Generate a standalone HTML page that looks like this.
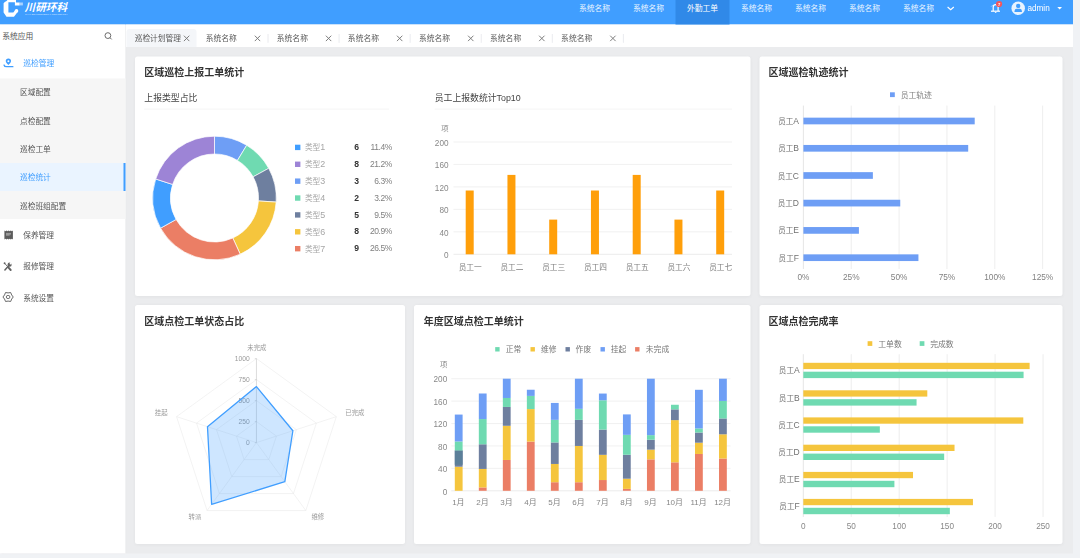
<!DOCTYPE html>
<html lang="zh-CN">
<head>
<meta charset="utf-8">
<title>巡检统计</title>
<style>
html,body{margin:0;padding:0;width:1080px;height:558px;overflow:hidden;background:#f0f2f5}
#root{position:absolute;left:0;top:0;width:2160px;height:1116px;transform:scale(0.5);transform-origin:0 0;overflow:hidden;
font-family:"Liberation Sans","Noto Sans CJK SC",sans-serif}
#root div,#root svg{position:absolute}
.s{left:0;top:0;pointer-events:none}
.t{white-space:nowrap;margin:0}
</style>
</head>
<body>
<div id="root">
<div style="left:0px;top:0px;width:2146.2px;height:1107px;background:#ebecee;"></div>
<div style="left:0px;top:0px;width:2146.2px;height:49.2px;background:#409eff;"></div>
<div style="left:0px;top:49.2px;width:251.2px;height:1057.8px;background:#fff;box-shadow:1px 0 3px rgba(0,21,41,.10);"></div>
<div style="left:252px;top:49.2px;width:1894.2px;height:44.8px;background:#fff;"></div>
<div style="left:253px;top:58.4px;width:140.4px;height:35.8px;background:#f4f6f9;border-radius:6px 6px 0 0;"></div>
<svg class="s" width="2160" height="1116" viewBox="0 0 2160 1116"><polygon points="16.8,-2 32,-2 32,5 39.2,5 39.2,10.8 29.8,10.8 29.8,4.4 16.8,4.4 16.8,25 26.6,25 30.6,20 35.2,24 28,33.6 13,33.6 7.2,25.2 7.2,6.6 9.6,4.2 13.2,1.8" fill="#fff"/><rect x="39.2" y="5" width="6.6" height="5.8" fill="#fff" opacity=".55"/><circle cx="33" cy="21.8" r="3.6" fill="#fff"/></svg>
<div class="t" style="top:-2.5px;height:31.8px;line-height:31.8px;font-size:21.2px;color:#fff;font-weight:700;left:49.2px;font-style:italic;letter-spacing:0px;">川研环科</div>
<div class="t" style="top:24.93px;height:6.54px;line-height:6.54px;font-size:4.36px;color:rgba(255,255,255,.8);left:49.8px;letter-spacing:0.12px;">CYHK ENVIRONMENTAL TECHNOLOGY</div>
<div style="left:1351px;top:0px;width:108px;height:49.2px;background:#3089e8;"></div>
<div class="t" style="top:3.7px;height:23.4px;line-height:23.4px;font-size:15.6px;color:rgba(255,255,255,.92);left:1039px;width:300px;text-align:center;">系统名称</div>
<div class="t" style="top:3.7px;height:23.4px;line-height:23.4px;font-size:15.6px;color:rgba(255,255,255,.92);left:1147px;width:300px;text-align:center;">系统名称</div>
<div class="t" style="top:3.7px;height:23.4px;line-height:23.4px;font-size:15.6px;color:#fff;left:1255px;width:300px;text-align:center;">外勤工单</div>
<div class="t" style="top:3.7px;height:23.4px;line-height:23.4px;font-size:15.6px;color:rgba(255,255,255,.92);left:1363px;width:300px;text-align:center;">系统名称</div>
<div class="t" style="top:3.7px;height:23.4px;line-height:23.4px;font-size:15.6px;color:rgba(255,255,255,.92);left:1471px;width:300px;text-align:center;">系统名称</div>
<div class="t" style="top:3.7px;height:23.4px;line-height:23.4px;font-size:15.6px;color:rgba(255,255,255,.92);left:1579px;width:300px;text-align:center;">系统名称</div>
<div class="t" style="top:3.7px;height:23.4px;line-height:23.4px;font-size:15.6px;color:rgba(255,255,255,.92);left:1687px;width:300px;text-align:center;">系统名称</div>
<svg class="s" width="2160" height="1116" viewBox="0 0 2160 1116"><polyline points="1895.2,14 1901.4,19.4 1907.6,14" fill="none" stroke="#fff" stroke-width="2.3"/><path d="M1986.4 21.8 L1986.4 14.4 A4.9 5 0 0 1 1996.2 14.4 L1996.2 21.8" fill="none" stroke="#fff" stroke-width="2.4"/><line x1="1982" y1="22.4" x2="2000" y2="22.4" stroke="#fff" stroke-width="2.4"/><line x1="1982.8" y1="12.8" x2="1984.8" y2="10.8" stroke="#fff" stroke-width="1.6"/><line x1="1989.8" y1="24.8" x2="1992.8" y2="24.8" stroke="#fff" stroke-width="1.8"/><circle cx="1998.2" cy="8" r="6.2" fill="#f4565c"/><circle cx="2036.4" cy="16.6" r="13.5" fill="#e8f3ff"/><circle cx="2036.4" cy="11.8" r="4.4" fill="#409eff"/><path d="M2029 23.8 L2029 22 Q2029.4 17.4 2033.2 17.4 L2039.6 17.4 Q2043.4 17.4 2043.8 22 L2043.8 23.8 Z" fill="#409eff"/><polygon points="2114.6,14 2124,14 2119.3,19.2" fill="#fff"/></svg>
<div class="t" style="top:1.7px;height:12.6px;line-height:12.6px;font-size:8.4px;color:#fff;font-weight:700;left:1848.2px;width:300px;text-align:center;">7</div>
<div class="t" style="top:3.5px;height:24.6px;line-height:24.6px;font-size:16.4px;color:#fff;left:2054.8px;">admin</div>
<div class="t" style="top:60.1px;height:23.4px;line-height:23.4px;font-size:15.6px;color:#555;left:4.4px;">系统应用</div>
<svg class="s" width="2160" height="1116" viewBox="0 0 2160 1116"><circle cx="215.8" cy="71.2" r="5.8" fill="none" stroke="#6a6a6a" stroke-width="2"/><line x1="220" y1="75.4" x2="223.4" y2="78.8" stroke="#6a6a6a" stroke-width="2"/><path d="M16.8 130.2 C13 126 11.5 124.4 11.5 122.2 A5.3 5.3 0 1 1 22.1 122.2 C22.1 124.4 20.6 126 16.8 130.2 Z" fill="#409eff"/><circle cx="16.8" cy="122.4" r="2" fill="#fff"/><path d="M8 130 Q8.8 133.4 13.2 133.4 L25.8 133.4" fill="none" stroke="#409eff" stroke-width="2.5" stroke-linecap="round"/></svg>
<div class="t" style="top:114.7px;height:23.4px;line-height:23.4px;font-size:15.6px;color:#409eff;left:46.4px;">巡检管理</div>
<div style="left:0px;top:157.2px;width:251.2px;height:281.2px;background:#f6f6f6;"></div>
<div style="left:0px;top:326.2px;width:251.2px;height:56.2px;background:#eaf4ff;"></div>
<div style="left:247.2px;top:326.2px;width:4px;height:56.2px;background:#409eff;"></div>
<div class="t" style="top:173.05px;height:23.1px;line-height:23.1px;font-size:15.4px;color:#555;left:40px;">区域配置</div>
<div class="t" style="top:230.05px;height:23.1px;line-height:23.1px;font-size:15.4px;color:#555;left:40px;">点检配置</div>
<div class="t" style="top:286.45px;height:23.1px;line-height:23.1px;font-size:15.4px;color:#555;left:40px;">巡检工单</div>
<div class="t" style="top:341.85px;height:23.1px;line-height:23.1px;font-size:15.4px;color:#409eff;left:40px;">巡检统计</div>
<div class="t" style="top:399.85px;height:23.1px;line-height:23.1px;font-size:15.4px;color:#555;left:40px;">巡检班组配置</div>
<div class="t" style="top:459.05px;height:23.1px;line-height:23.1px;font-size:15.4px;color:#555;left:46.4px;">保养管理</div>
<div class="t" style="top:520.65px;height:23.1px;line-height:23.1px;font-size:15.4px;color:#555;left:46.4px;">报修管理</div>
<div class="t" style="top:583.85px;height:23.1px;line-height:23.1px;font-size:15.4px;color:#555;left:46.4px;">系统设置</div>
<svg class="s" width="2160" height="1116" viewBox="0 0 2160 1116"><path d="M8.8 461.2 L10.8 462.4 L13 461.2 L15.2 462.4 L17.3 461.2 L19.4 462.4 L21.6 461.2 L23.8 462.4 L25.8 461.2 V478.8 L23.8 477.6 L21.6 478.8 L19.4 477.6 L17.3 478.8 L15.2 477.6 L13 478.8 L10.8 477.6 L8.8 478.8 Z" fill="#5c5c5c"/><rect x="12" y="465.8" width="10" height="5.6" fill="#9a9a9a"/><rect x="19.2" y="469.2" width="3.2" height="2.6" fill="#5c5c5c"/><line x1="9.8" y1="540" x2="17.8" y2="531" stroke="#626262" stroke-width="3" stroke-linecap="round"/><circle cx="19.2" cy="529.4" r="4.2" fill="#626262"/><circle cx="21.4" cy="526.8" r="2.1" fill="#fff"/><line x1="9" y1="526.4" x2="15.2" y2="533.2" stroke="#626262" stroke-width="1.8"/><circle cx="9.2" cy="526.6" r="1.9" fill="#626262"/><line x1="16.2" y1="534.4" x2="21.4" y2="540" stroke="#626262" stroke-width="3.8" stroke-linecap="round"/><path d="M26.5 594 Q22.7 597.75 21.35 602.92 Q16.2 601.5 11.05 602.92 Q9.7 597.75 5.9 594 Q9.7 590.25 11.05 585.08 Q16.2 586.5 21.35 585.08 Q22.7 590.25 26.5 594 Z" fill="none" stroke="#606060" stroke-width="1.9" stroke-linejoin="round"/><ellipse cx="16.2" cy="594" rx="3.7" ry="3.2" fill="none" stroke="#606060" stroke-width="1.8"/></svg>
<div class="t" style="top:65.25px;height:23.1px;line-height:23.1px;font-size:15.4px;color:#5a5a5a;left:269.4px;">巡检计划管理</div>
<div class="t" style="top:65.1px;height:23.4px;line-height:23.4px;font-size:15.6px;color:#5a5a5a;left:411.4px;">系统名称</div>
<div class="t" style="top:65.1px;height:23.4px;line-height:23.4px;font-size:15.6px;color:#5a5a5a;left:553.56px;">系统名称</div>
<div class="t" style="top:65.1px;height:23.4px;line-height:23.4px;font-size:15.6px;color:#5a5a5a;left:695.72px;">系统名称</div>
<div class="t" style="top:65.1px;height:23.4px;line-height:23.4px;font-size:15.6px;color:#5a5a5a;left:837.88px;">系统名称</div>
<div class="t" style="top:65.1px;height:23.4px;line-height:23.4px;font-size:15.6px;color:#5a5a5a;left:980.04px;">系统名称</div>
<div class="t" style="top:65.1px;height:23.4px;line-height:23.4px;font-size:15.6px;color:#5a5a5a;left:1122.2px;">系统名称</div>
<svg class="s" width="2160" height="1116" viewBox="0 0 2160 1116"><line x1="367.8" y1="71.4" x2="378.6" y2="82.2" stroke="#777" stroke-width="1.9"/><line x1="367.8" y1="82.2" x2="378.6" y2="71.4" stroke="#777" stroke-width="1.9"/><line x1="509.6" y1="71.4" x2="520.4" y2="82.2" stroke="#777" stroke-width="1.9"/><line x1="509.6" y1="82.2" x2="520.4" y2="71.4" stroke="#777" stroke-width="1.9"/><line x1="536" y1="68" x2="536" y2="85.6" stroke="#d8dbe2" stroke-width="1.1"/><line x1="651.76" y1="71.4" x2="662.56" y2="82.2" stroke="#777" stroke-width="1.9"/><line x1="651.76" y1="82.2" x2="662.56" y2="71.4" stroke="#777" stroke-width="1.9"/><line x1="678.16" y1="68" x2="678.16" y2="85.6" stroke="#d8dbe2" stroke-width="1.1"/><line x1="793.92" y1="71.4" x2="804.72" y2="82.2" stroke="#777" stroke-width="1.9"/><line x1="793.92" y1="82.2" x2="804.72" y2="71.4" stroke="#777" stroke-width="1.9"/><line x1="820.32" y1="68" x2="820.32" y2="85.6" stroke="#d8dbe2" stroke-width="1.1"/><line x1="936.08" y1="71.4" x2="946.88" y2="82.2" stroke="#777" stroke-width="1.9"/><line x1="936.08" y1="82.2" x2="946.88" y2="71.4" stroke="#777" stroke-width="1.9"/><line x1="962.48" y1="68" x2="962.48" y2="85.6" stroke="#d8dbe2" stroke-width="1.1"/><line x1="1078.24" y1="71.4" x2="1089.04" y2="82.2" stroke="#777" stroke-width="1.9"/><line x1="1078.24" y1="82.2" x2="1089.04" y2="71.4" stroke="#777" stroke-width="1.9"/><line x1="1104.64" y1="68" x2="1104.64" y2="85.6" stroke="#d8dbe2" stroke-width="1.1"/><line x1="1220.4" y1="71.4" x2="1231.2" y2="82.2" stroke="#777" stroke-width="1.9"/><line x1="1220.4" y1="82.2" x2="1231.2" y2="71.4" stroke="#777" stroke-width="1.9"/><line x1="1246.8" y1="68" x2="1246.8" y2="85.6" stroke="#d8dbe2" stroke-width="1.1"/></svg>
<div style="left:269.8px;top:112.6px;width:1230.8px;height:479px;background:#fff;border-radius:5px;box-shadow:0 1.2px 7px rgba(0,0,0,.045);"></div>
<div style="left:1519px;top:112.6px;width:606.4px;height:479px;background:#fff;border-radius:5px;box-shadow:0 1.2px 7px rgba(0,0,0,.045);"></div>
<div style="left:269.8px;top:610.2px;width:540.4px;height:477.6px;background:#fff;border-radius:5px;box-shadow:0 1.2px 7px rgba(0,0,0,.045);"></div>
<div style="left:828.2px;top:610.2px;width:672.4px;height:477.6px;background:#fff;border-radius:5px;box-shadow:0 1.2px 7px rgba(0,0,0,.045);"></div>
<div style="left:1519px;top:610.2px;width:606.4px;height:477.6px;background:#fff;border-radius:5px;box-shadow:0 1.2px 7px rgba(0,0,0,.045);"></div>
<div class="t" style="top:130px;height:30px;line-height:30px;font-size:20px;color:#333;font-weight:700;left:288.6px;">区域巡检上报工单统计</div>
<div class="t" style="top:130px;height:30px;line-height:30px;font-size:20px;color:#333;font-weight:700;left:1537.2px;">区域巡检轨迹统计</div>
<div class="t" style="top:627.4px;height:30px;line-height:30px;font-size:20px;color:#333;font-weight:700;left:288.6px;">区域点检工单状态占比</div>
<div class="t" style="top:627.4px;height:30px;line-height:30px;font-size:20px;color:#333;font-weight:700;left:847.6px;">年度区域点检工单统计</div>
<div class="t" style="top:627.4px;height:30px;line-height:30px;font-size:20px;color:#333;font-weight:700;left:1537.2px;">区域点检完成率</div>
<div class="t" style="top:182.53px;height:26.55px;line-height:26.55px;font-size:17.7px;color:#444;left:288.6px;">上报类型占比</div>
<div class="t" style="top:182.53px;height:26.55px;line-height:26.55px;font-size:17.7px;color:#444;left:869.4px;">员工上报数统计Top10</div>
<div class="t" style="top:283.25px;height:23.1px;line-height:23.1px;font-size:15.4px;color:#a6a6a6;left:609.8px;">类型<span style="font-size:1.16em">1</span></div>
<div class="t" style="top:281.5px;height:25.8px;line-height:25.8px;font-size:17.2px;color:#333;font-weight:700;left:708.6px;">6</div>
<div class="t" style="top:281.65px;height:25.5px;line-height:25.5px;font-size:17px;color:#808080;left:483.8px;width:300px;text-align:right;letter-spacing:-0.84px;">11.4%</div>
<div class="t" style="top:317.01px;height:23.1px;line-height:23.1px;font-size:15.4px;color:#a6a6a6;left:609.8px;">类型<span style="font-size:1.16em">2</span></div>
<div class="t" style="top:315.26px;height:25.8px;line-height:25.8px;font-size:17.2px;color:#333;font-weight:700;left:708.6px;">8</div>
<div class="t" style="top:315.41px;height:25.5px;line-height:25.5px;font-size:17px;color:#808080;left:483.8px;width:300px;text-align:right;letter-spacing:-0.84px;">21.2%</div>
<div class="t" style="top:350.77px;height:23.1px;line-height:23.1px;font-size:15.4px;color:#a6a6a6;left:609.8px;">类型<span style="font-size:1.16em">3</span></div>
<div class="t" style="top:349.02px;height:25.8px;line-height:25.8px;font-size:17.2px;color:#333;font-weight:700;left:708.6px;">3</div>
<div class="t" style="top:349.17px;height:25.5px;line-height:25.5px;font-size:17px;color:#808080;left:483.8px;width:300px;text-align:right;letter-spacing:-0.84px;">6.3%</div>
<div class="t" style="top:384.53px;height:23.1px;line-height:23.1px;font-size:15.4px;color:#a6a6a6;left:609.8px;">类型<span style="font-size:1.16em">4</span></div>
<div class="t" style="top:382.78px;height:25.8px;line-height:25.8px;font-size:17.2px;color:#333;font-weight:700;left:708.6px;">2</div>
<div class="t" style="top:382.93px;height:25.5px;line-height:25.5px;font-size:17px;color:#808080;left:483.8px;width:300px;text-align:right;letter-spacing:-0.84px;">3.2%</div>
<div class="t" style="top:418.29px;height:23.1px;line-height:23.1px;font-size:15.4px;color:#a6a6a6;left:609.8px;">类型<span style="font-size:1.16em">5</span></div>
<div class="t" style="top:416.54px;height:25.8px;line-height:25.8px;font-size:17.2px;color:#333;font-weight:700;left:708.6px;">5</div>
<div class="t" style="top:416.69px;height:25.5px;line-height:25.5px;font-size:17px;color:#808080;left:483.8px;width:300px;text-align:right;letter-spacing:-0.84px;">9.5%</div>
<div class="t" style="top:452.05px;height:23.1px;line-height:23.1px;font-size:15.4px;color:#a6a6a6;left:609.8px;">类型<span style="font-size:1.16em">6</span></div>
<div class="t" style="top:450.3px;height:25.8px;line-height:25.8px;font-size:17.2px;color:#333;font-weight:700;left:708.6px;">8</div>
<div class="t" style="top:450.45px;height:25.5px;line-height:25.5px;font-size:17px;color:#808080;left:483.8px;width:300px;text-align:right;letter-spacing:-0.84px;">20.9%</div>
<div class="t" style="top:485.81px;height:23.1px;line-height:23.1px;font-size:15.4px;color:#a6a6a6;left:609.8px;">类型<span style="font-size:1.16em">7</span></div>
<div class="t" style="top:484.06px;height:25.8px;line-height:25.8px;font-size:17.2px;color:#333;font-weight:700;left:708.6px;">9</div>
<div class="t" style="top:484.21px;height:25.5px;line-height:25.5px;font-size:17px;color:#808080;left:483.8px;width:300px;text-align:right;letter-spacing:-0.84px;">26.5%</div>
<div class="t" style="top:497.5px;height:24.6px;line-height:24.6px;font-size:16.4px;color:#888;left:597px;width:300px;text-align:right;">0</div>
<div class="t" style="top:452.58px;height:24.6px;line-height:24.6px;font-size:16.4px;color:#888;left:597px;width:300px;text-align:right;">40</div>
<div class="t" style="top:407.66px;height:24.6px;line-height:24.6px;font-size:16.4px;color:#888;left:597px;width:300px;text-align:right;">80</div>
<div class="t" style="top:362.74px;height:24.6px;line-height:24.6px;font-size:16.4px;color:#888;left:597px;width:300px;text-align:right;">120</div>
<div class="t" style="top:317.82px;height:24.6px;line-height:24.6px;font-size:16.4px;color:#888;left:597px;width:300px;text-align:right;">160</div>
<div class="t" style="top:272.9px;height:24.6px;line-height:24.6px;font-size:16.4px;color:#888;left:597px;width:300px;text-align:right;">200</div>
<div class="t" style="top:244.9px;height:22.2px;line-height:22.2px;font-size:14.8px;color:#8a8a8a;left:597.2px;width:300px;text-align:right;">项</div>
<div class="t" style="top:523.05px;height:23.1px;line-height:23.1px;font-size:15.4px;color:#808080;left:790.4px;width:300px;text-align:center;">员工一</div>
<div class="t" style="top:523.05px;height:23.1px;line-height:23.1px;font-size:15.4px;color:#808080;left:873.9px;width:300px;text-align:center;">员工二</div>
<div class="t" style="top:523.05px;height:23.1px;line-height:23.1px;font-size:15.4px;color:#808080;left:957.4px;width:300px;text-align:center;">员工三</div>
<div class="t" style="top:523.05px;height:23.1px;line-height:23.1px;font-size:15.4px;color:#808080;left:1040.9px;width:300px;text-align:center;">员工四</div>
<div class="t" style="top:523.05px;height:23.1px;line-height:23.1px;font-size:15.4px;color:#808080;left:1124.4px;width:300px;text-align:center;">员工五</div>
<div class="t" style="top:523.05px;height:23.1px;line-height:23.1px;font-size:15.4px;color:#808080;left:1207.9px;width:300px;text-align:center;">员工六</div>
<div class="t" style="top:523.05px;height:23.1px;line-height:23.1px;font-size:15.4px;color:#808080;left:1291.4px;width:300px;text-align:center;">员工七</div>
<svg class="s" width="2160" height="1116" viewBox="0 0 2160 1116"><line x1="288.6" y1="218.2" x2="778" y2="218.2" stroke="#ececec" stroke-width="1.2"/><line x1="869.4" y1="218.2" x2="1464" y2="218.2" stroke="#ececec" stroke-width="1.2"/><path d="M429 272.4 A123.6 123.6 0 0 1 493.4 290.5 L474.85 320.89 A88 88 0 0 0 429 308 Z" fill="#6e9ef5" stroke="#fff" stroke-width="1.4"/><path d="M493.4 290.5 A123.6 123.6 0 0 1 537.42 336.64 L506.19 353.74 A88 88 0 0 0 474.85 320.89 Z" fill="#6fdab1" stroke="#fff" stroke-width="1.4"/><path d="M537.42 336.64 A123.6 123.6 0 0 1 552.33 404.19 L516.81 401.83 A88 88 0 0 0 506.19 353.74 Z" fill="#6e7f9f" stroke="#fff" stroke-width="1.4"/><path d="M552.33 404.19 A123.6 123.6 0 0 1 480.45 508.38 L465.63 476.01 A88 88 0 0 0 516.81 401.83 Z" fill="#f5c53d" stroke="#fff" stroke-width="1.4"/><path d="M480.45 508.38 A123.6 123.6 0 0 1 321.11 456.3 L352.18 438.93 A88 88 0 0 0 465.63 476.01 Z" fill="#eb7e65" stroke="#fff" stroke-width="1.4"/><path d="M321.11 456.3 A123.6 123.6 0 0 1 311.38 358.01 L345.26 368.95 A88 88 0 0 0 352.18 438.93 Z" fill="#409eff" stroke="#fff" stroke-width="1.4"/><path d="M311.38 358.01 A123.6 123.6 0 0 1 429 272.4 L429 308 A88 88 0 0 0 345.26 368.95 Z" fill="#9d84d6" stroke="#fff" stroke-width="1.4"/><rect x="590" y="289.4" width="10.8" height="10.8" fill="#409eff"/><rect x="590" y="323.16" width="10.8" height="10.8" fill="#9d84d6"/><rect x="590" y="356.92" width="10.8" height="10.8" fill="#6e9ef5"/><rect x="590" y="390.68" width="10.8" height="10.8" fill="#6fdab1"/><rect x="590" y="424.44" width="10.8" height="10.8" fill="#6e7f9f"/><rect x="590" y="458.2" width="10.8" height="10.8" fill="#f5c53d"/><rect x="590" y="491.96" width="10.8" height="10.8" fill="#eb7e65"/><line x1="907" y1="508.6" x2="1464" y2="508.6" stroke="#dedede" stroke-width="1.2"/><line x1="907" y1="463.68" x2="1464" y2="463.68" stroke="#e8e8e8" stroke-width="1.2"/><line x1="907" y1="418.76" x2="1464" y2="418.76" stroke="#e8e8e8" stroke-width="1.2"/><line x1="907" y1="373.84" x2="1464" y2="373.84" stroke="#e8e8e8" stroke-width="1.2"/><line x1="907" y1="328.92" x2="1464" y2="328.92" stroke="#e8e8e8" stroke-width="1.2"/><line x1="907" y1="284" x2="1464" y2="284" stroke="#e8e8e8" stroke-width="1.2"/><rect x="931.4" y="381.03" width="16" height="127.57" fill="#ff9f0a"/><rect x="1014.9" y="349.81" width="16" height="158.79" fill="#ff9f0a"/><rect x="1098.4" y="439.2" width="16" height="69.4" fill="#ff9f0a"/><rect x="1181.9" y="381.03" width="16" height="127.57" fill="#ff9f0a"/><rect x="1265.4" y="349.81" width="16" height="158.79" fill="#ff9f0a"/><rect x="1348.9" y="439.2" width="16" height="69.4" fill="#ff9f0a"/><rect x="1432.4" y="381.03" width="16" height="127.57" fill="#ff9f0a"/></svg>
<div class="t" style="top:177.9px;height:23.4px;line-height:23.4px;font-size:15.6px;color:#808080;left:1801.4px;">员工轨迹</div>
<div class="t" style="top:542.75px;height:24.9px;line-height:24.9px;font-size:16.6px;color:#828282;left:1456.8px;width:300px;text-align:center;">0%</div>
<div class="t" style="top:542.75px;height:24.9px;line-height:24.9px;font-size:16.6px;color:#828282;left:1552.5px;width:300px;text-align:center;">25%</div>
<div class="t" style="top:542.75px;height:24.9px;line-height:24.9px;font-size:16.6px;color:#828282;left:1648.2px;width:300px;text-align:center;">50%</div>
<div class="t" style="top:542.75px;height:24.9px;line-height:24.9px;font-size:16.6px;color:#828282;left:1743.9px;width:300px;text-align:center;">75%</div>
<div class="t" style="top:542.75px;height:24.9px;line-height:24.9px;font-size:16.6px;color:#828282;left:1839.6px;width:300px;text-align:center;">100%</div>
<div class="t" style="top:542.75px;height:24.9px;line-height:24.9px;font-size:16.6px;color:#828282;left:1935.3px;width:300px;text-align:center;">125%</div>
<div class="t" style="top:231.6px;height:22.8px;line-height:22.8px;font-size:15.2px;color:#707070;left:1298px;width:300px;text-align:right;">员工<span style="font-size:1.12em">A</span></div>
<div class="t" style="top:286.2px;height:22.8px;line-height:22.8px;font-size:15.2px;color:#707070;left:1298px;width:300px;text-align:right;">员工<span style="font-size:1.12em">B</span></div>
<div class="t" style="top:340.6px;height:22.8px;line-height:22.8px;font-size:15.2px;color:#707070;left:1298px;width:300px;text-align:right;">员工<span style="font-size:1.12em">C</span></div>
<div class="t" style="top:395.8px;height:22.8px;line-height:22.8px;font-size:15.2px;color:#707070;left:1298px;width:300px;text-align:right;">员工<span style="font-size:1.12em">D</span></div>
<div class="t" style="top:450.4px;height:22.8px;line-height:22.8px;font-size:15.2px;color:#707070;left:1298px;width:300px;text-align:right;">员工<span style="font-size:1.12em">E</span></div>
<div class="t" style="top:505px;height:22.8px;line-height:22.8px;font-size:15.2px;color:#707070;left:1298px;width:300px;text-align:right;">员工<span style="font-size:1.12em">F</span></div>
<svg class="s" width="2160" height="1116" viewBox="0 0 2160 1116"><rect x="1780" y="184.6" width="9.6" height="9.6" fill="#6e9ef5"/><line x1="1606.8" y1="211.2" x2="1606.8" y2="538" stroke="#d4d4d4" stroke-width="1.2"/><line x1="1702.5" y1="211.2" x2="1702.5" y2="538" stroke="#e0e0e0" stroke-width="1.2"/><line x1="1798.2" y1="211.2" x2="1798.2" y2="538" stroke="#e0e0e0" stroke-width="1.2"/><line x1="1893.9" y1="211.2" x2="1893.9" y2="538" stroke="#e0e0e0" stroke-width="1.2"/><line x1="1989.6" y1="211.2" x2="1989.6" y2="538" stroke="#e0e0e0" stroke-width="1.2"/><line x1="2085.3" y1="211.2" x2="2085.3" y2="538" stroke="#e0e0e0" stroke-width="1.2"/><rect x="1606.8" y="235.3" width="342.61" height="13.4" fill="#6e9ef5"/><rect x="1606.8" y="289.9" width="329.59" height="13.4" fill="#6e9ef5"/><rect x="1606.8" y="344.3" width="138.96" height="13.4" fill="#6e9ef5"/><rect x="1606.8" y="399.5" width="193.7" height="13.4" fill="#6e9ef5"/><rect x="1606.8" y="454.1" width="111.01" height="13.4" fill="#6e9ef5"/><rect x="1606.8" y="508.7" width="230.06" height="13.4" fill="#6e9ef5"/></svg>
<div class="t" style="top:876.35px;height:20.1px;line-height:20.1px;font-size:13.4px;color:#999;left:199.4px;width:300px;text-align:right;">0</div>
<div class="t" style="top:834.35px;height:20.1px;line-height:20.1px;font-size:13.4px;color:#999;left:199.4px;width:300px;text-align:right;">250</div>
<div class="t" style="top:792.35px;height:20.1px;line-height:20.1px;font-size:13.4px;color:#999;left:199.4px;width:300px;text-align:right;">500</div>
<div class="t" style="top:750.35px;height:20.1px;line-height:20.1px;font-size:13.4px;color:#999;left:199.4px;width:300px;text-align:right;">750</div>
<div class="t" style="top:708.35px;height:20.1px;line-height:20.1px;font-size:13.4px;color:#999;left:199.4px;width:300px;text-align:right;">1000</div>
<svg class="s" width="2160" height="1116" viewBox="0 0 2160 1116"><polygon points="512.9,843.2 552.84,872.22 537.59,919.18 488.21,919.18 472.96,872.22" fill="none" stroke="#e6e6e6" stroke-width="1"/><polygon points="512.9,801.2 592.79,859.24 562.27,953.16 463.53,953.16 433.01,859.24" fill="none" stroke="#e6e6e6" stroke-width="1"/><polygon points="512.9,759.2 632.73,846.26 586.96,987.14 438.84,987.14 393.07,846.26" fill="none" stroke="#e6e6e6" stroke-width="1"/><polygon points="512.9,717.2 672.68,833.29 611.65,1021.11 414.15,1021.11 353.12,833.29" fill="none" stroke="#e6e6e6" stroke-width="1"/><line x1="512.9" y1="885.2" x2="672.68" y2="833.29" stroke="#e6e6e6" stroke-width="1"/><line x1="512.9" y1="885.2" x2="611.65" y2="1021.11" stroke="#e6e6e6" stroke-width="1"/><line x1="512.9" y1="885.2" x2="414.15" y2="1021.11" stroke="#e6e6e6" stroke-width="1"/><line x1="512.9" y1="885.2" x2="353.12" y2="833.29" stroke="#e6e6e6" stroke-width="1"/><line x1="512.9" y1="885.2" x2="512.9" y2="717.2" stroke="#c4c4c4" stroke-width="1.2"/><line x1="509.7" y1="885.2" x2="512.9" y2="885.2" stroke="#c4c4c4" stroke-width="1.2"/><line x1="509.7" y1="843.2" x2="512.9" y2="843.2" stroke="#c4c4c4" stroke-width="1.2"/><line x1="509.7" y1="801.2" x2="512.9" y2="801.2" stroke="#c4c4c4" stroke-width="1.2"/><line x1="509.7" y1="759.2" x2="512.9" y2="759.2" stroke="#c4c4c4" stroke-width="1.2"/><line x1="509.7" y1="717.2" x2="512.9" y2="717.2" stroke="#c4c4c4" stroke-width="1.2"/><polygon points="512.9,773.14 585.76,861.53 569.68,963.35 423.24,1008.61 414.96,853.38" fill="rgba(64,158,255,.26)" stroke="#409eff" stroke-width="2.6" stroke-linejoin="round"/></svg>
<div class="t" style="top:686.2px;height:19.2px;line-height:19.2px;font-size:12.8px;color:#999;left:363.8px;width:300px;text-align:center;">未完成</div>
<div class="t" style="top:816.2px;height:19.2px;line-height:19.2px;font-size:12.8px;color:#999;left:690.6px;">已完成</div>
<div class="t" style="top:816.2px;height:19.2px;line-height:19.2px;font-size:12.8px;color:#999;left:35.2px;width:300px;text-align:right;">挂起</div>
<div class="t" style="top:1024.4px;height:19.2px;line-height:19.2px;font-size:12.8px;color:#999;left:102.8px;width:300px;text-align:right;">转派</div>
<div class="t" style="top:1024.4px;height:19.2px;line-height:19.2px;font-size:12.8px;color:#999;left:622.8px;">维修</div>
<div class="t" style="top:687.1px;height:23.4px;line-height:23.4px;font-size:15.6px;color:#777;left:1011.4px;">正常</div>
<div class="t" style="top:687.1px;height:23.4px;line-height:23.4px;font-size:15.6px;color:#777;left:1082px;">维修</div>
<div class="t" style="top:687.1px;height:23.4px;line-height:23.4px;font-size:15.6px;color:#777;left:1151.2px;">作废</div>
<div class="t" style="top:687.1px;height:23.4px;line-height:23.4px;font-size:15.6px;color:#777;left:1221.4px;">挂起</div>
<div class="t" style="top:687.1px;height:23.4px;line-height:23.4px;font-size:15.6px;color:#777;left:1291.6px;">未完成</div>
<div class="t" style="top:970.5px;height:24.6px;line-height:24.6px;font-size:16.4px;color:#888;left:594.4px;width:300px;text-align:right;">0</div>
<div class="t" style="top:925.66px;height:24.6px;line-height:24.6px;font-size:16.4px;color:#888;left:594.4px;width:300px;text-align:right;">40</div>
<div class="t" style="top:880.82px;height:24.6px;line-height:24.6px;font-size:16.4px;color:#888;left:594.4px;width:300px;text-align:right;">80</div>
<div class="t" style="top:835.98px;height:24.6px;line-height:24.6px;font-size:16.4px;color:#888;left:594.4px;width:300px;text-align:right;">120</div>
<div class="t" style="top:791.14px;height:24.6px;line-height:24.6px;font-size:16.4px;color:#888;left:594.4px;width:300px;text-align:right;">160</div>
<div class="t" style="top:746.3px;height:24.6px;line-height:24.6px;font-size:16.4px;color:#888;left:594.4px;width:300px;text-align:right;">200</div>
<div class="t" style="top:718.1px;height:22.2px;line-height:22.2px;font-size:14.8px;color:#8a8a8a;left:594.6px;width:300px;text-align:right;">项</div>
<div class="t" style="top:992.4px;height:24px;line-height:24px;font-size:16px;color:#858585;left:766.8px;width:300px;text-align:center;">1月</div>
<div class="t" style="top:992.4px;height:24px;line-height:24px;font-size:16px;color:#858585;left:814.84px;width:300px;text-align:center;">2月</div>
<div class="t" style="top:992.4px;height:24px;line-height:24px;font-size:16px;color:#858585;left:862.88px;width:300px;text-align:center;">3月</div>
<div class="t" style="top:992.4px;height:24px;line-height:24px;font-size:16px;color:#858585;left:910.92px;width:300px;text-align:center;">4月</div>
<div class="t" style="top:992.4px;height:24px;line-height:24px;font-size:16px;color:#858585;left:958.96px;width:300px;text-align:center;">5月</div>
<div class="t" style="top:992.4px;height:24px;line-height:24px;font-size:16px;color:#858585;left:1007px;width:300px;text-align:center;">6月</div>
<div class="t" style="top:992.4px;height:24px;line-height:24px;font-size:16px;color:#858585;left:1055.04px;width:300px;text-align:center;">7月</div>
<div class="t" style="top:992.4px;height:24px;line-height:24px;font-size:16px;color:#858585;left:1103.08px;width:300px;text-align:center;">8月</div>
<div class="t" style="top:992.4px;height:24px;line-height:24px;font-size:16px;color:#858585;left:1151.12px;width:300px;text-align:center;">9月</div>
<div class="t" style="top:992.4px;height:24px;line-height:24px;font-size:16px;color:#858585;left:1199.16px;width:300px;text-align:center;">10月</div>
<div class="t" style="top:992.4px;height:24px;line-height:24px;font-size:16px;color:#858585;left:1247.2px;width:300px;text-align:center;">11月</div>
<div class="t" style="top:992.4px;height:24px;line-height:24px;font-size:16px;color:#858585;left:1295.24px;width:300px;text-align:center;">12月</div>
<svg class="s" width="2160" height="1116" viewBox="0 0 2160 1116"><rect x="990.4" y="694.2" width="8.8" height="8.8" fill="#6fdab1"/><rect x="1061" y="694.2" width="8.8" height="8.8" fill="#f5c53d"/><rect x="1131" y="694.2" width="8.8" height="8.8" fill="#6e7f9f"/><rect x="1201" y="694.2" width="8.8" height="8.8" fill="#6e9ef5"/><rect x="1270.2" y="694.2" width="8.8" height="8.8" fill="#eb7e65"/><line x1="902.6" y1="981.6" x2="1461" y2="981.6" stroke="#dedede" stroke-width="1.2"/><line x1="902.6" y1="936.76" x2="1461" y2="936.76" stroke="#e8e8e8" stroke-width="1.2"/><line x1="902.6" y1="891.92" x2="1461" y2="891.92" stroke="#e8e8e8" stroke-width="1.2"/><line x1="902.6" y1="847.08" x2="1461" y2="847.08" stroke="#e8e8e8" stroke-width="1.2"/><line x1="902.6" y1="802.24" x2="1461" y2="802.24" stroke="#e8e8e8" stroke-width="1.2"/><line x1="902.6" y1="757.4" x2="1461" y2="757.4" stroke="#e8e8e8" stroke-width="1.2"/><rect x="909.6" y="933.4" width="15.6" height="48.2" fill="#f5c53d"/><rect x="909.6" y="900.89" width="15.6" height="32.51" fill="#6e7f9f"/><rect x="909.6" y="900.89" width="15.6" height="28.59" fill="#5b7f99"/><rect x="909.6" y="882.95" width="15.6" height="17.94" fill="#6fdab1"/><rect x="909.6" y="829.14" width="15.6" height="53.81" fill="#6e9ef5"/><rect x="957.64" y="974.87" width="15.6" height="6.73" fill="#eb7e65"/><rect x="957.64" y="937.88" width="15.6" height="36.99" fill="#f5c53d"/><rect x="957.64" y="888.56" width="15.6" height="49.32" fill="#6e7f9f"/><rect x="957.64" y="838.11" width="15.6" height="50.45" fill="#6fdab1"/><rect x="957.64" y="786.99" width="15.6" height="51.12" fill="#6e9ef5"/><rect x="1005.68" y="919.95" width="15.6" height="61.65" fill="#eb7e65"/><rect x="1005.68" y="851.56" width="15.6" height="68.38" fill="#f5c53d"/><rect x="1005.68" y="813.9" width="15.6" height="37.67" fill="#6e7f9f"/><rect x="1005.68" y="795.96" width="15.6" height="17.94" fill="#6fdab1"/><rect x="1005.68" y="757.4" width="15.6" height="38.56" fill="#6e9ef5"/><rect x="1053.72" y="883.18" width="15.6" height="98.42" fill="#eb7e65"/><rect x="1053.72" y="818.16" width="15.6" height="65.02" fill="#f5c53d"/><rect x="1053.72" y="791.81" width="15.6" height="26.34" fill="#6fdab1"/><rect x="1053.72" y="779.48" width="15.6" height="12.33" fill="#6e9ef5"/><rect x="1101.76" y="964.45" width="15.6" height="17.15" fill="#eb7e65"/><rect x="1101.76" y="927.9" width="15.6" height="36.54" fill="#f5c53d"/><rect x="1101.76" y="884.86" width="15.6" height="43.05" fill="#6e7f9f"/><rect x="1101.76" y="839.68" width="15.6" height="45.18" fill="#6fdab1"/><rect x="1101.76" y="805.83" width="15.6" height="33.85" fill="#6e9ef5"/><rect x="1149.8" y="964.45" width="15.6" height="17.15" fill="#eb7e65"/><rect x="1149.8" y="891.92" width="15.6" height="72.53" fill="#f5c53d"/><rect x="1149.8" y="839.79" width="15.6" height="52.13" fill="#6e7f9f"/><rect x="1149.8" y="817.71" width="15.6" height="22.08" fill="#6fdab1"/><rect x="1149.8" y="757.4" width="15.6" height="60.31" fill="#6e9ef5"/><rect x="1197.84" y="960.08" width="15.6" height="21.52" fill="#eb7e65"/><rect x="1197.84" y="909.63" width="15.6" height="50.45" fill="#f5c53d"/><rect x="1197.84" y="859.19" width="15.6" height="50.45" fill="#6e7f9f"/><rect x="1197.84" y="800.56" width="15.6" height="58.63" fill="#6fdab1"/><rect x="1197.84" y="787.11" width="15.6" height="13.45" fill="#6e9ef5"/><rect x="1245.88" y="977.79" width="15.6" height="3.81" fill="#eb7e65"/><rect x="1245.88" y="957.39" width="15.6" height="20.4" fill="#f5c53d"/><rect x="1245.88" y="909.52" width="15.6" height="47.87" fill="#6e7f9f"/><rect x="1245.88" y="869.72" width="15.6" height="39.8" fill="#6fdab1"/><rect x="1245.88" y="828.81" width="15.6" height="40.92" fill="#6e9ef5"/><rect x="1293.92" y="918.71" width="15.6" height="62.89" fill="#eb7e65"/><rect x="1293.92" y="899.32" width="15.6" height="19.39" fill="#f5c53d"/><rect x="1293.92" y="879.48" width="15.6" height="19.84" fill="#6e7f9f"/><rect x="1293.92" y="870.28" width="15.6" height="9.19" fill="#6fdab1"/><rect x="1293.92" y="757.4" width="15.6" height="112.88" fill="#6e9ef5"/><rect x="1341.96" y="924.65" width="15.6" height="56.95" fill="#eb7e65"/><rect x="1341.96" y="840.24" width="15.6" height="84.41" fill="#f5c53d"/><rect x="1341.96" y="818.72" width="15.6" height="21.52" fill="#6e7f9f"/><rect x="1341.96" y="809.53" width="15.6" height="9.19" fill="#6fdab1"/><rect x="1390" y="907.95" width="15.6" height="73.65" fill="#eb7e65"/><rect x="1390" y="885.42" width="15.6" height="22.53" fill="#f5c53d"/><rect x="1390" y="865.02" width="15.6" height="20.4" fill="#6e7f9f"/><rect x="1390" y="856.94" width="15.6" height="8.07" fill="#6fdab1"/><rect x="1390" y="779.6" width="15.6" height="77.35" fill="#6e9ef5"/><rect x="1438.04" y="917.03" width="15.6" height="64.57" fill="#eb7e65"/><rect x="1438.04" y="868.6" width="15.6" height="48.43" fill="#f5c53d"/><rect x="1438.04" y="836.88" width="15.6" height="31.72" fill="#6e7f9f"/><rect x="1438.04" y="801.9" width="15.6" height="34.98" fill="#6fdab1"/><rect x="1438.04" y="757.4" width="15.6" height="44.5" fill="#6e9ef5"/></svg>
<div class="t" style="top:675.5px;height:23.4px;line-height:23.4px;font-size:15.6px;color:#777;left:1756.6px;">工单数</div>
<div class="t" style="top:676.7px;height:23.4px;line-height:23.4px;font-size:15.6px;color:#777;left:1860.4px;">完成数</div>
<div class="t" style="top:1040.1px;height:24.6px;line-height:24.6px;font-size:16.4px;color:#888;left:1456.6px;width:300px;text-align:center;">0</div>
<div class="t" style="top:1040.1px;height:24.6px;line-height:24.6px;font-size:16.4px;color:#888;left:1552.5px;width:300px;text-align:center;">50</div>
<div class="t" style="top:1040.1px;height:24.6px;line-height:24.6px;font-size:16.4px;color:#888;left:1648.4px;width:300px;text-align:center;">100</div>
<div class="t" style="top:1040.1px;height:24.6px;line-height:24.6px;font-size:16.4px;color:#888;left:1744.3px;width:300px;text-align:center;">150</div>
<div class="t" style="top:1040.1px;height:24.6px;line-height:24.6px;font-size:16.4px;color:#888;left:1840.2px;width:300px;text-align:center;">200</div>
<div class="t" style="top:1040.1px;height:24.6px;line-height:24.6px;font-size:16.4px;color:#888;left:1936.1px;width:300px;text-align:center;">250</div>
<div class="t" style="top:730px;height:22.8px;line-height:22.8px;font-size:15.2px;color:#707070;left:1299.4px;width:300px;text-align:right;">员工<span style="font-size:1.12em">A</span></div>
<div class="t" style="top:785px;height:22.8px;line-height:22.8px;font-size:15.2px;color:#707070;left:1299.4px;width:300px;text-align:right;">员工<span style="font-size:1.12em">B</span></div>
<div class="t" style="top:839.2px;height:22.8px;line-height:22.8px;font-size:15.2px;color:#707070;left:1299.4px;width:300px;text-align:right;">员工<span style="font-size:1.12em">C</span></div>
<div class="t" style="top:893.8px;height:22.8px;line-height:22.8px;font-size:15.2px;color:#707070;left:1299.4px;width:300px;text-align:right;">员工<span style="font-size:1.12em">D</span></div>
<div class="t" style="top:948.2px;height:22.8px;line-height:22.8px;font-size:15.2px;color:#707070;left:1299.4px;width:300px;text-align:right;">员工<span style="font-size:1.12em">E</span></div>
<div class="t" style="top:1002.2px;height:22.8px;line-height:22.8px;font-size:15.2px;color:#707070;left:1299.4px;width:300px;text-align:right;">员工<span style="font-size:1.12em">F</span></div>
<svg class="s" width="2160" height="1116" viewBox="0 0 2160 1116"><rect x="1735.2" y="682.4" width="9.4" height="9.4" fill="#f5c53d"/><rect x="1839.4" y="682.4" width="9.4" height="9.4" fill="#6fdab1"/><line x1="1606.6" y1="708.4" x2="1606.6" y2="1033.8" stroke="#d4d4d4" stroke-width="1.2"/><line x1="1702.5" y1="708.4" x2="1702.5" y2="1033.8" stroke="#e0e0e0" stroke-width="1.2"/><line x1="1798.4" y1="708.4" x2="1798.4" y2="1033.8" stroke="#e0e0e0" stroke-width="1.2"/><line x1="1894.3" y1="708.4" x2="1894.3" y2="1033.8" stroke="#e0e0e0" stroke-width="1.2"/><line x1="1990.2" y1="708.4" x2="1990.2" y2="1033.8" stroke="#e0e0e0" stroke-width="1.2"/><line x1="2086.1" y1="708.4" x2="2086.1" y2="1033.8" stroke="#e0e0e0" stroke-width="1.2"/><rect x="1606.6" y="725.6" width="452.65" height="12.6" fill="#f5c53d"/><rect x="1606.6" y="743.4" width="440.56" height="12.8" fill="#6fdab1"/><rect x="1606.6" y="780.6" width="248" height="12.6" fill="#f5c53d"/><rect x="1606.6" y="798.4" width="226.52" height="12.8" fill="#6fdab1"/><rect x="1606.6" y="834.8" width="439.99" height="12.6" fill="#f5c53d"/><rect x="1606.6" y="852.6" width="153.06" height="12.8" fill="#6fdab1"/><rect x="1606.6" y="889.4" width="302.47" height="12.6" fill="#f5c53d"/><rect x="1606.6" y="907.2" width="281.75" height="12.8" fill="#6fdab1"/><rect x="1606.6" y="943.8" width="219.42" height="12.6" fill="#f5c53d"/><rect x="1606.6" y="961.6" width="182.21" height="12.8" fill="#6fdab1"/><rect x="1606.6" y="997.8" width="339.29" height="12.6" fill="#f5c53d"/><rect x="1606.6" y="1015.6" width="293.07" height="12.8" fill="#6fdab1"/></svg>
</div>
</body>
</html>
